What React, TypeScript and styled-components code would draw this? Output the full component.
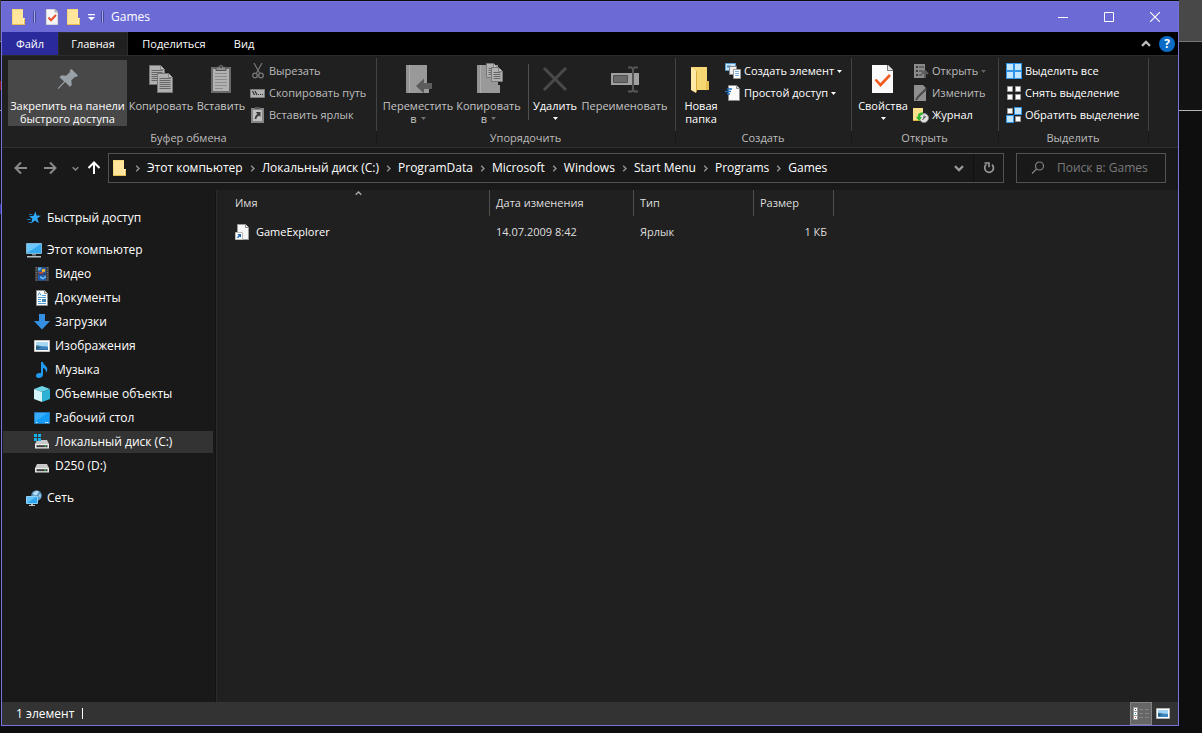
import React from "react";
import styled, { createGlobalStyle, css } from "styled-components";

const GlobalStyle = createGlobalStyle`
  * { box-sizing: border-box; }
  html, body { margin: 0; padding: 0; }
  body {
    background: #0e0e0e;
    color: #fff;
    font: 12px/16px "Segoe UI", "Open Sans", "Noto Sans", sans-serif;
  }
  button, input { font: inherit; color: inherit; border: 0; margin: 0; padding: 0; background: none; }
  a { color: inherit; text-decoration: none; }
  ul { list-style: none; margin: 0; padding: 0; }
  svg { display: block; flex: none; }
`;

/* ---------- desktop around the window ---------- */

const Desktop = styled.div`
  display: grid;
  grid-template-columns: 1px minmax(0, 1fr) 23px;
  min-height: 100vh;
  background: #0e0e0e;
`;

const Edge = styled.div`
  display: flex;
  flex-direction: column;
`;

const EdgePart = styled.span<{ $h: number; $color: string; $line?: string }>`
  flex: none;
  height: ${(p) => p.$h}px;
  background: ${(p) => p.$color};
  border-bottom: ${(p) => (p.$line ? `1px solid ${p.$line}` : "0")};
`;

const Window = styled.main`
  display: flex;
  flex-direction: column;
  margin: 1px 0 7px;
  border: 1px solid #7474dc;
  background: #191919;
`;

/* ---------- title bar ---------- */

const TitleBar = styled.header`
  display: flex;
  align-items: center;
  height: 30px;
  padding-left: 9px;
  background: #6c6bd6;
`;

const QuickAccess = styled.div`
  display: flex;
  align-items: center;
  gap: 6px;
`;

const QuickButton = styled.button`
  display: flex;
  width: 16px;
  height: 16px;
`;

const TitleRule = styled.span`
  width: 3px;
  height: 12px;
  margin-right: 2px;
  border: solid #48489a;
  border-width: 0 1px;
  background: #a9a8ea;
`;

const Title = styled.h1`
  flex: 1;
  margin: 0;
  padding-left: 5px;
  font-size: 12px;
  font-weight: 400;
`;

const CaptionButton = styled.button`
  display: flex;
  justify-content: center;
  align-items: center;
  width: 46px;
  height: 30px;
`;

/* ---------- tabs ---------- */

const TabBar = styled.nav`
  display: flex;
  align-items: center;
  height: 23px;
  font-size: 11px;
  background: #000;
`;

const Tab = styled.button<{ $kind?: "file" | "active"; $w: number }>`
  width: ${(p) => p.$w}px;
  height: 23px;
  text-align: center;
  ${(p) => p.$kind === "file" && css`background: #2a2a9c;`}
  ${(p) => p.$kind === "active" && css`background: #202020; border: 1px solid #2c2c2c; border-bottom: 0;`}
`;

const TabTools = styled.div`
  display: flex;
  align-items: center;
  gap: 8px;
  margin-left: auto;
  padding-right: 3px;
`;

const IconButton = styled.button<{ $w?: number }>`
  display: flex;
  justify-content: center;
  align-items: center;
  width: ${(p) => p.$w ?? 16}px;
  height: 16px;
`;

const Help = styled.button`
  width: 16px;
  height: 16px;
  border-radius: 8px;
  background: #0a6cc8;
  font-size: 12px;
  font-weight: 700;
  line-height: 16px;
`;

/* ---------- ribbon ---------- */

const Ribbon = styled.div`
  display: flex;
  height: 93px;
  border-top: 1px solid #2c2c2c;
  border-bottom: 1px solid #303030;
  font-size: 11px;
  background: #202020;
`;

const Group = styled.section<{ $w: number }>`
  display: flex;
  flex-direction: column;
  width: ${(p) => p.$w}px;
  padding: 4px 0 0 6px;
  background: linear-gradient(#434343, #434343) right 0 top 2px / 1px 73px no-repeat,
    linear-gradient(#181818, #181818) right 0 top 75px / 1px 12px no-repeat;
`;

const GroupBody = styled.div`
  display: flex;
  height: 66px;
`;

const GroupTitle = styled.h2`
  margin: 0;
  padding-right: 8px;
  font-size: 11px;
  font-weight: 400;
  line-height: 24px;
  text-align: center;
  color: #bdbdbd;
`;

const BigButton = styled.button<{ $w: number; $dim?: boolean; $lit?: boolean }>`
  display: flex;
  flex-direction: column;
  align-items: center;
  width: ${(p) => p.$w}px;
  height: 66px;
  padding-top: 3px;
  line-height: 13px;
  white-space: nowrap;
  text-align: center;
  color: ${(p) => (p.$dim ? "#c4c4c4" : "#fff")};
  background: ${(p) => (p.$lit ? "#484848" : "none")};
  svg.icon { margin-bottom: 4px; }
`;

const LabelLine = styled.span`
  display: flex;
  justify-content: center;
  align-items: center;
  gap: 4px;
  height: 13px;
`;

const SmallColumn = styled.div<{ $gap?: number }>`
  display: flex;
  flex-direction: column;
  margin-left: ${(p) => p.$gap ?? 0}px;
`;

const SmallButton = styled.button<{ $dim?: boolean }>`
  display: flex;
  align-items: center;
  gap: 3px;
  height: 22px;
  white-space: nowrap;
  color: ${(p) => (p.$dim ? "#bcbcbc" : "#fff")};
`;

const InnerRule = styled.span`
  width: 1px;
  height: 56px;
  margin: 4px 2px 0 4px;
  background: #505050;
`;

/* ---------- address row ---------- */

const AddressRow = styled.div`
  display: flex;
  align-items: center;
  height: 42px;
  padding: 0 12px 2px 11px;
`;

const NavButtons = styled.div`
  display: flex;
  align-items: center;
  gap: 6px;
  width: 95px;
`;

const AddressBox = styled.div`
  display: flex;
  flex: 1;
  align-items: center;
  height: 30px;
  border: 1px solid #535353;
  padding-left: 3px;
`;

const Crumbs = styled.ol`
  display: flex;
  flex: 1;
  list-style: none;
  margin: 0;
  padding: 0 0 0 6px;
`;

const Crumb = styled.li`
  display: flex;
  align-items: center;
  gap: 6px;
  padding-right: 6px;
  white-space: nowrap;
`;

const RefreshButton = styled.button`
  display: flex;
  justify-content: center;
  align-items: center;
  width: 30px;
  height: 28px;
  border-left: 1px solid #101010;
`;

const SearchBox = styled.label`
  display: flex;
  align-items: center;
  gap: 12px;
  width: 150px;
  height: 30px;
  margin-left: 12px;
  padding-left: 14px;
  border: 1px solid #535353;
`;

const SearchInput = styled.input`
  flex: 1;
  min-width: 0;
  outline: 0;
  &::placeholder { color: #7a7a7a; opacity: 1; }
`;

/* ---------- body ---------- */

const Body = styled.div`
  display: flex;
  flex: 1;
`;

const Sidebar = styled.nav`
  width: 214px;
  padding: 16px 2px 0 1px;
  border-right: 1px solid #131313;
`;

const Branch = styled.ul`
  margin-bottom: 10px;
`;

const TreeLink = styled.a<{ $child?: boolean; $selected?: boolean }>`
  display: flex;
  align-items: center;
  gap: 5px;
  height: 22px;
  margin: 1px 0 2px;
  padding-left: ${(p) => (p.$child ? 31 : 23)}px;
  white-space: nowrap;
  background: ${(p) => (p.$selected ? "#333" : "none")};
`;

const FilePane = styled.section`
  flex: 1;
  border-left: 1px solid #2b2b2b;
  padding-left: 12px;
  background: #202020;
`;

const FileTable = styled.table`
  width: 605px;
  table-layout: fixed;
  border-collapse: separate;
  border-spacing: 0;
  font-size: 11px;
`;

const HeadCell = styled.th<{ $w: number }>`
  position: relative;
  width: ${(p) => p.$w}px;
  height: 26px;
  padding: 0 6px;
  border-right: 1px solid #505050;
  font-weight: 400;
  text-align: left;
  color: #dedede;
`;

const SortMark = styled.span`
  position: absolute;
  top: 0;
  left: 50%;
  margin-left: -4px;
`;

const Cell = styled.td<{ $right?: boolean }>`
  padding: 8px 7px 0 6px;
  color: #dedede;
  text-align: ${(p) => (p.$right ? "right" : "left")};
`;

const FileName = styled.a`
  display: flex;
  align-items: center;
  gap: 5px;
  color: #fff;
`;

/* ---------- status bar ---------- */

const StatusBar = styled.footer`
  display: flex;
  align-items: center;
  height: 23px;
  padding: 0 4px 0 14px;
  background: #333;
`;

const Caret = styled.span`
  width: 1px;
  height: 11px;
  margin-left: 8px;
  background: #fff;
`;

const ViewButtons = styled.div`
  display: flex;
  margin-left: auto;
`;

const ViewButton = styled.button<{ $on?: boolean }>`
  display: flex;
  justify-content: center;
  align-items: center;
  width: 22px;
  height: 23px;
  border: 1px solid ${(p) => (p.$on ? "#838383" : "transparent")};
  background: ${(p) => (p.$on ? "#666" : "none")};
`;

/* ---------- icons ---------- */

const FolderIcon = () => (
  <svg width="16" height="16" viewBox="0 0 16 16">
    <path d="M1 0h11v9h2v7H1z" fill="#ffe69c" />
    <path d="M1 0h11v1H2v14H1z" fill="#f6d67a" />
    <path d="M1 15h11v-5h2v6H1z" fill="#e9be50" />
    <path d="M12 9h1v6h-1z" fill="#fff0bd" />
  </svg>
);

const CheckDoc = ({ size = 16 }: { size?: number }) =>
  size === 16 ? (
    <svg width="16" height="16" viewBox="0 0 16 16">
      <path d="M2 0h9l3 3v13H2z" fill="#f7f7f7" stroke="#8b8b9d" strokeWidth="0.6" />
      <path d="M11 0v3h3" fill="#ccc" stroke="#888" strokeWidth="0.6" />
      <path d="M4.5 8.500l2.500 2.800 5-5.300" fill="none" stroke="#e8502a" strokeWidth="2" />
    </svg>
  ) : (
    <svg className="icon" width="32" height="32" viewBox="0 0 32 32">
      <path d="M5 2h16l5 5v23H5z" fill="#fafafa" />
      <path d="M20.500 2v5.500H26" fill="#e3e3e3" stroke="#777" strokeWidth="1" />
      <path d="M8.500 16.500l5 5.500 9.500-10" fill="none" stroke="#f05a1e" strokeWidth="2.600" />
    </svg>
  );

const CustomizeIcon = () => (
  <svg width="7" height="7" viewBox="0 0 7 7">
    <path d="M0 0h7v1.200H0zM0 3h7L3.500 6.500z" fill="#fff" />
  </svg>
);

const MinimizeIcon = () => (
  <svg width="10" height="10"><path d="M0 5h10v1H0z" fill="#fff" /></svg>
);
const MaximizeIcon = () => (
  <svg width="10" height="10"><path d="M.5.5h9v9h-9z" fill="none" stroke="#fff" /></svg>
);
const CloseIcon = () => (
  <svg width="10" height="10"><path d="M0 0l10 10M10 0L0 10" stroke="#fff" strokeWidth="1.100" /></svg>
);

const PinIcon = () => (
  <svg className="icon" width="32" height="32" viewBox="0 0 32 32">
    <path d="M19.500 6l6.500 6.500-2 1.700-1-.5-3.700 3.700.5 4.600-2 1.800-4.700-4.700L6.500 26l-.8-.8 6.400-6.800-4.600-4.200 2-1.900 4.600.4 4-3.700-.5-1.200z" fill="#98a0a8" />
  </svg>
);

const GreyPage = ({ x, y, w, h }: { x: number; y: number; w: number; h: number }) => {
  const lines: number[] = [];
  for (let ly = y + 5; ly < y + h - 2; ly += 2) lines.push(ly);
  return (
    <g>
      <path d={`M${x} ${y}h${w - 4}l4 4v${h - 4}h-${w}z`} fill="#b0b0b0" stroke="#777" strokeWidth="1" />
      <path d={`M${x + w - 4} ${y}v4h4`} fill="#c4c4c4" stroke="#777" strokeWidth="0.800" />
      {lines.map((ly) => (
        <path key={ly} d={`M${x + 2} ${ly}h${w - 4}`} stroke="#666" strokeWidth="1" />
      ))}
    </g>
  );
};

const CopyIcon = () => (
  <svg className="icon" width="32" height="32" viewBox="0 0 32 32">
    <GreyPage x={4.5} y={2.5} w={15} h={19} />
    <GreyPage x={12.5} y={10.500} w={15} h={19} />
  </svg>
);

const PasteIcon = () => (
  <svg className="icon" width="32" height="32" viewBox="0 0 32 32">
    <path d="M6 4h20v26H6z" fill="#6a6a6a" />
    <path d="M8 6h16v22H8z" fill="#b2b2b2" />
    <path d="M10 10.500h12M10 13.500h12M10 16.500h12M10 19.500h12M10 22.500h12M10 25.500h8" stroke="#8c8c8c" />
    <path d="M11 7.500V4h3a2 2 0 0 1 4 0h3v3.500z" fill="#8c8c8c" stroke="#444" strokeWidth="0.800" />
    <circle cx="16" cy="4" r="1" fill="#333" />
  </svg>
);

const CutIcon = () => (
  <svg width="16" height="16" viewBox="0 0 16 16" fill="none" stroke="#777">
    <path d="M4 0l5.500 10M12 0L6.500 10" strokeWidth="1.200" />
    <circle cx="5" cy="12.500" r="2.300" strokeWidth="1.300" />
    <circle cx="11" cy="12.500" r="2.300" strokeWidth="1.300" />
  </svg>
);

const PathIcon = () => (
  <svg width="16" height="16" viewBox="0 0 16 16">
    <path d="M.5 4.500h14v8H.5z" fill="#b0b0b0" stroke="#7d7d7d" />
    <path d="M2.500 6l2 4M5 6l2 4" stroke="#333" strokeWidth="1.200" />
    <path d="M8 9.500h1M10 9.500h1M12 9.500h1" stroke="#333" />
  </svg>
);

const ShortcutPasteIcon = () => (
  <svg width="16" height="16" viewBox="0 0 16 16">
    <path d="M1 1h13v15H1z" fill="#858585" />
    <path d="M3 3h9v11H3z" fill="#c0c0c0" />
    <path d="M5 0h5v2H5z" fill="#555" />
    <path d="M10.500 5v5L9 8.600C7.500 9.500 6.600 10.500 6.300 12H4.600c.2-2 1-3.700 2.800-4.900L5.800 5z" fill="#3c3c3c" />
  </svg>
);

const MoveIcon = () => (
  <svg className="icon" width="32" height="32" viewBox="0 0 32 32">
    <path d="M4 2h21v20h2v8H4z" fill="#999" />
    <path d="M4 2h3v28H4z" fill="#929292" />
    <path d="M7 2h1v28H7z" fill="#adadad" />
    <path d="M14 23l8-7.500V20h8v6h-8v4.500z" fill="#5c5c5c" />
  </svg>
);

const CopyToIcon = () => (
  <svg className="icon" width="32" height="32" viewBox="0 0 32 32">
    <path d="M4 2h21v20h2v8H4z" fill="#999" />
    <path d="M4 2h3v28H4z" fill="#929292" />
    <path d="M7 2h1v28H7z" fill="#adadad" />
    <GreyPage x={13.500} y={0.500} w={11} h={14} />
    <GreyPage x={18.500} y={4.500} w={11} h={14} />
  </svg>
);

const DeleteIcon = () => (
  <svg className="icon" width="32" height="32" viewBox="0 0 32 32">
    <path d="M5 5l22 22M27 5L5 27" stroke="#4a4a4a" strokeWidth="3" />
  </svg>
);

const RenameIcon = () => (
  <svg className="icon" width="32" height="32" viewBox="0 0 32 32">
    <path d="M2 10h28v12H2z" fill="#a0a0a0" />
    <path d="M4.500 12.500h14v7h-14z" fill="#6a6a6a" stroke="#505050" />
    <path d="M19 4.500h3.500l1.500 1.500 1.500-1.500H29M24 5v22M19 28.500h3.500L24 27l1.500 1.500H29" fill="none" stroke="#565656" strokeWidth="2" />
  </svg>
);

const NewFolderIcon = () => (
  <svg className="icon" width="32" height="32" viewBox="0 0 32 32">
    <path d="M6 4h16v14h2v9H10V10z" fill="#f7d774" />
    <path d="M6 4l5 4v22l-5-3z" fill="#ffe9a6" />
    <path d="M11 8l1 .5V28l-1 2z" fill="#d9ab3c" />
    <path d="M21 18h3v9h-3z" fill="#e9be50" />
  </svg>
);

const NewItemIcon = () => (
  <svg width="16" height="16" viewBox="0 0 16 16">
    <path d="M.5.5h10v7H.5z" fill="#c9e7fa" stroke="#5a9bc8" />
    <path d="M2 2.500h4v2H2z" fill="#3d8ac4" />
    <path d="M4.500 3.500h7v8h-7z" fill="#eee" stroke="#888" />
    <path d="M8.500 6.500h7v9h-7z" fill="#fff" stroke="#999" />
    <path d="M10 8.500h4M10 10.500h4M10 12.500h4" stroke="#7aaedc" />
  </svg>
);

const EasyAccessIcon = () => (
  <svg width="16" height="16" viewBox="0 0 16 16">
    <path d="M3.500.5h8l3 3v12h-11z" fill="#fafafa" stroke="#8a8a8a" />
    <path d="M11.500.5v3h3" fill="#ddd" stroke="#8a8a8a" />
    <path d="M2 4h5M0 6.500h6M2 9h3" stroke="#1a70c0" strokeWidth="1.400" />
  </svg>
);

const OpenIcon = () => (
  <svg width="16" height="16" viewBox="0 0 16 16">
    <path d="M1 1h11v14H1z" fill="#8a8a8a" />
    <path d="M3 3h2v2H3zM3 7h2v2H3zM3 11h2v2H3zM6 3.500h5v1H6zM6 7.500h4v1H6zM6 11.500h3v1H6z" fill="#3c3c3c" />
    <path d="M9 11l3-3 3 3M12 9v6" stroke="#5c5c5c" strokeWidth="2" fill="none" />
  </svg>
);

const EditIcon = () => (
  <svg width="16" height="16" viewBox="0 0 16 16">
    <path d="M1 0h9l3 3v13H1z" fill="#8f8f8f" />
    <path d="M13.500 3.500L5 12l-2 3" stroke="#4a4a4a" strokeWidth="2" fill="none" />
  </svg>
);

const HistoryIcon = () => (
  <svg width="16" height="16" viewBox="0 0 16 16">
    <path d="M0 1h10v13H0z" fill="#fbe08c" />
    <path d="M0 13h10v1H0z" fill="#e0b040" />
    <circle cx="11" cy="11" r="4.500" fill="#e4e4e4" stroke="#8a8a8a" />
    <path d="M11 8.500V11l2-1.500M11 11l-1.500 2" stroke="#444" fill="none" />
    <path d="M10 5.500C6 5 4.500 7.500 4.800 10H3l3 4 3-4H7c0-1.600 1-2.700 3-2.500z" fill="#2fb52f" />
  </svg>
);

const SelectGrid = ({ lit }: { lit: number[] }) => (
  <svg width="16" height="16" viewBox="0 0 16 16">
    {[0, 1, 2, 3].map((i) => {
      const x = (i % 2) * 8;
      const y = Math.floor(i / 2) * 8;
      return lit.includes(i) ? (
        <g key={i}>
          <path d={`M${x} ${y}h8v8h-8z`} fill="#3095e6" />
          <path d={`M${x + 1} ${y + 1}h6v6h-6z`} fill="#c2e6ff" />
        </g>
      ) : (
        <path key={i} d={`M${x + 1.500} ${y + 1.500}h5v5h-5z`} fill="#fff" stroke="#999" />
      );
    })}
  </svg>
);

const DownMark = ({ color = "#fff" }: { color?: string }) => (
  <svg width="5" height="3" viewBox="0 0 5 3"><path d="M0 0h5L2.500 3z" fill={color} /></svg>
);

const ArrowIcon = ({ turn, color }: { turn: number; color: string }) => (
  <svg width="14" height="14" viewBox="0 0 14 14">
    <path transform={`rotate(${turn} 7 7)`} d="M13 7H2M7 1.500L1.500 7 7 12.500" fill="none" stroke={color} strokeWidth="2" />
  </svg>
);

const Chevron = ({ turn = 0, color = "#8f8f8f", big = false }: { turn?: number; color?: string; big?: boolean }) => {
  const s = big ? 10 : 7;
  return (
    <svg width={s} height={s} viewBox="0 0 8 8">
      <path transform={`rotate(${turn} 4 4)`} d="M2.500 .8L5.700 4 2.500 7.200" fill="none" stroke={color} strokeWidth="1.700" />
    </svg>
  );
};

const RefreshIcon = () => (
  <svg width="12" height="12" viewBox="0 0 12 12">
    <path d="M9 2.600A4.400 4.400 0 1 1 3.400 2.400" fill="none" stroke="#9a9a9a" strokeWidth="1.700" />
    <path d="M1.500 1h4.500v4.300" fill="none" stroke="#9a9a9a" strokeWidth="1.600" />
  </svg>
);

const SearchIcon = () => (
  <svg width="14" height="14" viewBox="0 0 14 14" fill="none" stroke="#848484">
    <circle cx="8.500" cy="5" r="4" strokeWidth="1.200" />
    <path d="M5.500 8L1 12.500" strokeWidth="1.300" />
  </svg>
);

const StarIcon = () => (
  <svg width="16" height="16" viewBox="0 0 16 16">
    <path d="M9.500 1.500l1.100 4 4.400.2-3.700 2.500 1.600 5L9 10.600 5 13.500l1.400-4.700L3 6.300l4.400-.4z" fill="#2ea8f7" />
    <path d="M3 4.500h3.500M1 9.500h4M2.500 12.500h2.500" stroke="#1878b8" />
  </svg>
);

const ComputerIcon = () => (
  <svg width="16" height="16" viewBox="0 0 16 16">
    <path d="M.5 1.500h15v10H.5z" fill="#35a9ef" stroke="#7fb4d2" />
    <path d="M1 2h14L1 11z" fill="#6cc8fa" />
    <path d="M6 12h4v1.500H6z" fill="#7d8a94" />
    <path d="M1 14h14v1.500H1z" fill="#b4c0c8" />
  </svg>
);

const VideoIcon = () => (
  <svg width="16" height="16" viewBox="0 0 16 16">
    <path d="M1 1h14v14H1z" fill="#3a3a3a" />
    <path d="M2.500 1v14M13.500 1v14" stroke="#777" strokeDasharray="1 1.500" strokeWidth="1.500" />
    <path d="M4 1.500h8v6H4zM4 8.500h8v6H4z" fill="#2458a8" />
    <path d="M4 1.500h4l-2 3H4z" fill="#58aee8" />
    <circle cx="9.500" cy="4.500" r="1.800" fill="#f0b428" />
    <path d="M5 6h4v1.500H5z" fill="#cc4f28" />
    <path d="M6 10l3 1.500 3-2v2l-3 2-3-1.500z" fill="#63b7f0" />
  </svg>
);

const DocumentIcon = () => (
  <svg width="16" height="16" viewBox="0 0 16 16">
    <path d="M2.500.5h8l3 3v12h-11z" fill="#fff" stroke="#909090" />
    <path d="M10.500.5v3h3" fill="#ddd" stroke="#909090" />
    <path d="M4 5.500l1.500-3 1.500 3M8 5.500h4M4 7.500h8M4 9.500h3M4 11.500h3M4 13.500h8" fill="none" stroke="#4f9fd8" />
    <path d="M8 9h4v3H8z" fill="#4385b4" />
  </svg>
);

const DownloadIcon = () => (
  <svg width="16" height="16" viewBox="0 0 16 16">
    <path d="M5 0h6v7h5l-8 8.500L0 7h5z" fill="#3590e4" />
  </svg>
);

const PictureIcon = () => (
  <svg width="16" height="16" viewBox="0 0 16 16">
    <path d="M.5 2.500h15v11H.5z" fill="#fff" stroke="#c2c2c2" />
    <path d="M2 4h12v8H2z" fill="#a9d8f4" />
    <path d="M2 7.500c2-.8 4 .5 6 .7s4-.2 6 .6V12H2z" fill="#3b83bd" />
    <path d="M2 8l5 1.800L2 11z" fill="#2d5c60" />
    <path d="M2 11h12v1H2z" fill="#316da8" />
  </svg>
);

const ThumbnailsIcon = () => (
  <svg width="14" height="11" viewBox="0 0 14 11">
    <path d="M.5.5h13v10H.5z" fill="#fff" stroke="#b4b4b4" />
    <path d="M2 2h10v7H2z" fill="#9fd2f2" />
    <path d="M2 5c2-.6 3 .4 5 .6s3-.2 5 .4v3H2z" fill="#3b83bd" />
    <path d="M2 5.500L6 7 2 8z" fill="#2d5c60" />
  </svg>
);

const MusicIcon = () => (
  <svg width="16" height="16" viewBox="0 0 16 16">
    <path d="M7 0h2c.2 3 4.500 4 4.300 7.500 0 1.500-.8 2.500-1.500 3.500.6-2.500-.3-4-2.800-5v6.500C9 14.500 7 16 5 16s-3-1-3-2.300C2 12 4 10.700 7 11.200z" fill="#1f9bf0" />
  </svg>
);

const CubeIcon = () => (
  <svg width="16" height="16" viewBox="0 0 16 16">
    <path d="M8 0l8 3-8 3-8-3z" fill="#6fd4e8" />
    <path d="M0 3l8 3v10l-8-3z" fill="#d4f4fb" />
    <path d="M16 3L8 6v10l8-3z" fill="#2bb2d4" />
  </svg>
);

const DesktopIcon = () => (
  <svg width="16" height="16" viewBox="0 0 16 16">
    <path d="M.5 2.500h15v11H.5z" fill="#149bf5" stroke="#2878b8" />
    <path d="M1 3h12L1 12z" fill="#35adfa" />
    <path d="M2 12.500h1.500M11 12.500h1.500M13 12.500h1.500" stroke="#d8efff" />
  </svg>
);

const DriveIcon = ({ system = false }: { system?: boolean }) => (
  <svg width="16" height="16" viewBox="0 0 16 16">
    <path d="M3 6h10l2 4H1z" fill="#c9c9c9" />
    <path d="M1 10h14v4.500H1z" fill="#e9e9e9" />
    <path d="M2.500 11.200h11v2h-11z" fill="#3a3a3a" />
    <path d="M10.500 11.500H12v1.300h-1.500z" fill="#38d058" />
    {system && <path d="M0 0h7v7H0z" fill="#333" />}
    {system && <path d="M0 0h3v3H0zM4 0h3v3H4zM0 4h3v3H0zM4 4h3v3H4z" fill="#19b0f0" />}
  </svg>
);

const NetworkIcon = () => (
  <svg width="16" height="16" viewBox="0 0 16 16">
    <circle cx="10.500" cy="5.500" r="5.300" fill="#5a93bd" />
    <path d="M7 3c2-2.500 5-2.500 6-1.500L11 5 8 5.500z" fill="#b4dcf2" />
    <path d="M13 4l2 .5-.5 3.500-2-1z" fill="#8fc4e4" />
    <path d="M.5 6.500h11v7H.5z" fill="#2da5f0" stroke="#8fd0f5" />
    <path d="M1 7h9l-9 6z" fill="#62c2f9" />
    <path d="M3 15h6v1H3zM5 14h2v1H5z" fill="#b9c6cf" />
  </svg>
);

const ShortcutFileIcon = () => (
  <svg width="16" height="16" viewBox="0 0 16 16">
    <path d="M2.500.5h8l3 3v12h-11z" fill="#f6f6f6" stroke="#9b9b9b" />
    <path d="M10.500.5v3h3" fill="#fff" stroke="#8a8a8a" />
    <path d="M.5 8.500h7v7h-7z" fill="#fff" stroke="#bbb" />
    <path d="M6 10v3.500l-1.200-1L3 14.300l-1-1 1.700-1.800L2.500 10z" fill="#1c60b0" />
  </svg>
);

const DetailsIcon = () => (
  <svg width="16" height="13" viewBox="0 0 16 13">
    <path d="M0 0h5v13H0z" fill="#9a9a9a" />
    <path d="M1 1h3v3H1zM1 5h3v3H1zM1 9h3v3H1z" fill="#fff" />
    <path d="M2 2h1v1H2z" fill="#333" />
    <path d="M2 6h1v1H2z" fill="#2d7cc8" />
    <path d="M2 10h1v1H2z" fill="#d85a20" />
    <path d="M6 2.500h4M12 2.500h4M6 6.500h4M12 6.500h4M6 10.500h4M12 10.500h4" stroke="#858585" />
  </svg>
);

/* ---------- data ---------- */

const crumbs = ["Этот компьютер", "Локальный диск (C:)", "ProgramData", "Microsoft", "Windows", "Start Menu", "Programs", "Games"];

const places = [
  { name: "Видео", icon: <VideoIcon /> },
  { name: "Документы", icon: <DocumentIcon /> },
  { name: "Загрузки", icon: <DownloadIcon /> },
  { name: "Изображения", icon: <PictureIcon /> },
  { name: "Музыка", icon: <MusicIcon /> },
  { name: "Объемные объекты", icon: <CubeIcon /> },
  { name: "Рабочий стол", icon: <DesktopIcon /> },
  { name: "Локальный диск (C:)", icon: <DriveIcon system />, selected: true },
  { name: "D250 (D:)", icon: <DriveIcon /> },
];

const ClipboardGroup = () => (
  <Group $w={375}>
    <GroupBody>
      <BigButton $w={119} $lit>
        <PinIcon />
        <LabelLine>Закрепить на панели</LabelLine>
        <LabelLine>быстрого доступа</LabelLine>
      </BigButton>
      <BigButton $w={68} $dim><CopyIcon /><LabelLine>Копировать</LabelLine></BigButton>
      <BigButton $w={52} $dim><PasteIcon /><LabelLine>Вставить</LabelLine></BigButton>
      <SmallColumn $gap={3}>
        <SmallButton $dim><CutIcon />Вырезать</SmallButton>
        <SmallButton $dim><PathIcon />Скопировать путь</SmallButton>
        <SmallButton $dim><ShortcutPasteIcon />Вставить ярлык</SmallButton>
      </SmallColumn>
    </GroupBody>
    <GroupTitle>Буфер обмена</GroupTitle>
  </Group>
);

const OrganizeGroup = () => (
  <Group $w={299}>
    <GroupBody>
      <BigButton $w={70} $dim>
        <MoveIcon />
        <LabelLine>Переместить</LabelLine>
        <LabelLine>в<DownMark color="#707070" /></LabelLine>
      </BigButton>
      <BigButton $w={71} $dim>
        <CopyToIcon />
        <LabelLine>Копировать</LabelLine>
        <LabelLine>в<DownMark color="#707070" /></LabelLine>
      </BigButton>
      <InnerRule />
      <BigButton $w={48}>
        <DeleteIcon />
        <LabelLine>Удалить</LabelLine>
        <LabelLine><DownMark /></LabelLine>
      </BigButton>
      <BigButton $w={91} $dim><RenameIcon /><LabelLine>Переименовать</LabelLine></BigButton>
    </GroupBody>
    <GroupTitle>Упорядочить</GroupTitle>
  </Group>
);

const CreateGroup = () => (
  <Group $w={176}>
    <GroupBody>
      <BigButton $w={38}>
        <NewFolderIcon />
        <LabelLine>Новая</LabelLine>
        <LabelLine>папка</LabelLine>
      </BigButton>
      <SmallColumn $gap={5}>
        <SmallButton><NewItemIcon />Создать элемент<DownMark /></SmallButton>
        <SmallButton><EasyAccessIcon />Простой доступ<DownMark /></SmallButton>
      </SmallColumn>
    </GroupBody>
    <GroupTitle>Создать</GroupTitle>
  </Group>
);

const OpenGroup = () => (
  <Group $w={147}>
    <GroupBody>
      <BigButton $w={50}>
        <CheckDoc size={32} />
        <LabelLine>Свойства</LabelLine>
        <LabelLine><DownMark /></LabelLine>
      </BigButton>
      <SmallColumn $gap={5}>
        <SmallButton $dim><OpenIcon />Открыть<DownMark color="#606060" /></SmallButton>
        <SmallButton $dim><EditIcon />Изменить</SmallButton>
        <SmallButton><HistoryIcon />Журнал</SmallButton>
      </SmallColumn>
    </GroupBody>
    <GroupTitle>Открыть</GroupTitle>
  </Group>
);

const SelectGroup = () => (
  <Group $w={150}>
    <GroupBody>
      <SmallColumn $gap={1}>
        <SmallButton><SelectGrid lit={[0, 1, 2, 3]} />Выделить все</SmallButton>
        <SmallButton><SelectGrid lit={[]} />Снять выделение</SmallButton>
        <SmallButton><SelectGrid lit={[1, 2]} />Обратить выделение</SmallButton>
      </SmallColumn>
    </GroupBody>
    <GroupTitle>Выделить</GroupTitle>
  </Group>
);

export default function App() {
  return (
    <>
      <GlobalStyle />
      <Desktop>
        <Edge aria-hidden="true">
          <EdgePart $h={42} $color="#3c3c3c" $line="#777" />
          <EdgePart $h={39} $color="#141414" />
          <EdgePart $h={9} $color="#8c1414" />
          <EdgePart $h={21} $color="#141414" $line="#999" />
          <EdgePart $h={93} $color="#101010" />
          <EdgePart $h={10} $color="#3a3aa8" />
        </Edge>
        <Window>
          <TitleBar>
            <QuickAccess>
              <QuickButton aria-label="Меню окна"><FolderIcon /></QuickButton>
              <TitleRule />
              <QuickButton aria-label="Свойства"><CheckDoc /></QuickButton>
              <QuickButton aria-label="Новая папка"><FolderIcon /></QuickButton>
              <IconButton $w={7} aria-label="Настройка"><CustomizeIcon /></IconButton>
              <TitleRule />
            </QuickAccess>
            <Title>Games</Title>
            <CaptionButton aria-label="Свернуть"><MinimizeIcon /></CaptionButton>
            <CaptionButton aria-label="Развернуть"><MaximizeIcon /></CaptionButton>
            <CaptionButton aria-label="Закрыть"><CloseIcon /></CaptionButton>
          </TitleBar>
          <TabBar>
            <Tab $kind="file" $w={56}>Файл</Tab>
            <Tab $kind="active" $w={70}>Главная</Tab>
            <Tab $w={92}>Поделиться</Tab>
            <Tab $w={48}>Вид</Tab>
            <TabTools>
              <IconButton $w={10} aria-label="Свернуть ленту"><Chevron turn={-90} color="#bdbdbd" big /></IconButton>
              <Help aria-label="Справка">?</Help>
            </TabTools>
          </TabBar>
          <Ribbon>
            <ClipboardGroup />
            <OrganizeGroup />
            <CreateGroup />
            <OpenGroup />
            <SelectGroup />
          </Ribbon>
          <AddressRow>
            <NavButtons>
              <IconButton aria-label="Назад"><ArrowIcon turn={0} color="#8a8a8a" /></IconButton>
              <IconButton $w={30} aria-label="Вперед"><ArrowIcon turn={180} color="#8a8a8a" /></IconButton>
              <IconButton $w={8} aria-label="Последние расположения"><Chevron turn={90} color="#8a8a8a" /></IconButton>
              <IconButton $w={18} aria-label="Вверх"><ArrowIcon turn={90} color="#fff" /></IconButton>
            </NavButtons>
            <AddressBox>
              <FolderIcon />
              <Crumbs>
                {crumbs.map((c) => (
                  <Crumb key={c}><Chevron /><a href="#">{c}</a></Crumb>
                ))}
              </Crumbs>
              <IconButton $w={28} aria-label="Предыдущие расположения"><Chevron turn={90} color="#9a9a9a" big /></IconButton>
              <RefreshButton aria-label="Обновить"><RefreshIcon /></RefreshButton>
            </AddressBox>
            <SearchBox>
              <SearchIcon />
              <SearchInput type="search" aria-label="Поиск" placeholder="Поиск в: Games" />
            </SearchBox>
          </AddressRow>
          <Body>
            <Sidebar>
              <Branch>
                <li><TreeLink href="#"><StarIcon />Быстрый доступ</TreeLink></li>
              </Branch>
              <Branch>
                <li><TreeLink href="#"><ComputerIcon />Этот компьютер</TreeLink></li>
                {places.map((p) => (
                  <li key={p.name}>
                    <TreeLink href="#" $child $selected={p.selected}>{p.icon}{p.name}</TreeLink>
                  </li>
                ))}
              </Branch>
              <Branch>
                <li><TreeLink href="#"><NetworkIcon />Сеть</TreeLink></li>
              </Branch>
            </Sidebar>
            <FilePane>
              <FileTable>
                <thead>
                  <tr>
                    <HeadCell $w={261}>Имя<SortMark><Chevron turn={-90} color="#a8a8a8" /></SortMark></HeadCell>
                    <HeadCell $w={144}>Дата изменения</HeadCell>
                    <HeadCell $w={120}>Тип</HeadCell>
                    <HeadCell $w={80}>Размер</HeadCell>
                  </tr>
                </thead>
                <tbody>
                  <tr>
                    <Cell><FileName href="#"><ShortcutFileIcon />GameExplorer</FileName></Cell>
                    <Cell>14.07.2009 8:42</Cell>
                    <Cell>Ярлык</Cell>
                    <Cell $right>1 КБ</Cell>
                  </tr>
                </tbody>
              </FileTable>
            </FilePane>
          </Body>
          <StatusBar>
            1 элемент
            <Caret />
            <ViewButtons>
              <ViewButton $on aria-label="Таблица"><DetailsIcon /></ViewButton>
              <ViewButton aria-label="Крупные значки"><ThumbnailsIcon /></ViewButton>
            </ViewButtons>
          </StatusBar>
        </Window>
        <Edge aria-hidden="true">
          <EdgePart $h={42} $color="#484848" $line="#777" />
          <EdgePart $h={69} $color="#121212" $line="#b4b4b4" />
        </Edge>
      </Desktop>
    </>
  );
}
